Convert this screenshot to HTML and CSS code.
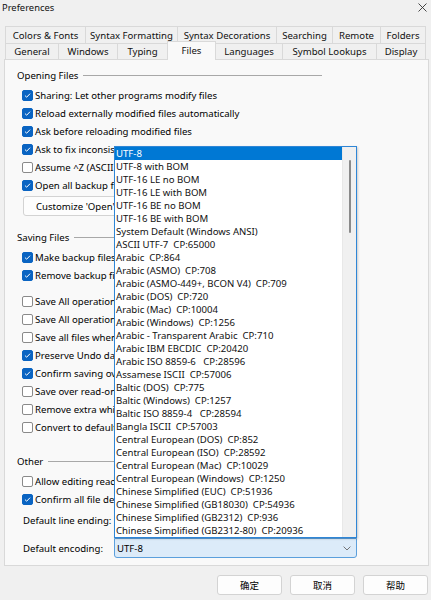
FILE: index.html
```html
<!DOCTYPE html>
<html>
<head>
<meta charset="utf-8">
<title>Preferences</title>
<link rel="stylesheet" href="styles.css">
</head>
<body>
<div class="titlebar">
  <span class="title">Preferences</span>
  <svg class="close" viewBox="0 0 9 9"><path d="M0.5 0.5 L8.5 8.5 M8.5 0.5 L0.5 8.5" stroke="#333" stroke-width="0.9" fill="none"/></svg>
</div>
<div class="tabs">
  <div class="tabrow row1">
    <div class="tab">Colors &amp; Fonts</div>
    <div class="tab">Syntax Formatting</div>
    <div class="tab">Syntax Decorations</div>
    <div class="tab">Searching</div>
    <div class="tab">Remote</div>
    <div class="tab">Folders</div>
  </div>
  <div class="tabrow row2">
    <div class="tab">General</div>
    <div class="tab">Windows</div>
    <div class="tab">Typing</div>
    <div class="tab active">Files</div>
    <div class="tab">Languages</div>
    <div class="tab">Symbol Lookups</div>
    <div class="tab">Display</div>
  </div>
</div>
<div class="panel">
  <div class="group-title"><span>Opening Files</span><i class="rule"></i></div>
  <div class="checks">
    <div class="check on"><span class="box"><svg viewBox="0 0 11 11"><path d="M2.4 5.6 L4.5 7.6 L8.6 3.3" fill="none" stroke="#fff" stroke-width="1.2"/></svg></span><span>Sharing: Let other programs modify files</span></div>
    <div class="check on"><span class="box"><svg viewBox="0 0 11 11"><path d="M2.4 5.6 L4.5 7.6 L8.6 3.3" fill="none" stroke="#fff" stroke-width="1.2"/></svg></span><span>Reload externally modified files automatically</span></div>
    <div class="check on"><span class="box"><svg viewBox="0 0 11 11"><path d="M2.4 5.6 L4.5 7.6 L8.6 3.3" fill="none" stroke="#fff" stroke-width="1.2"/></svg></span><span>Ask before reloading modified files</span></div>
    <div class="check on"><span class="box"><svg viewBox="0 0 11 11"><path d="M2.4 5.6 L4.5 7.6 L8.6 3.3" fill="none" stroke="#fff" stroke-width="1.2"/></svg></span><span>Ask to fix inconsistent line endings</span></div>
    <div class="check"><span class="box"></span><span>Assume ^Z (ASCII 26) is end of file</span></div>
    <div class="check on"><span class="box"><svg viewBox="0 0 11 11"><path d="M2.4 5.6 L4.5 7.6 L8.6 3.3" fill="none" stroke="#fff" stroke-width="1.2"/></svg></span><span>Open all backup files read-only</span></div>
  </div>
  <div class="pushbtn">Customize 'Open' Dialog...</div>

  <div class="group-title saving"><span>Saving Files</span><i class="rule"></i></div>
  <div class="checks">
    <div class="check on"><span class="box"><svg viewBox="0 0 11 11"><path d="M2.4 5.6 L4.5 7.6 L8.6 3.3" fill="none" stroke="#fff" stroke-width="1.2"/></svg></span><span>Make backup files when saving</span></div>
    <div class="check on"><span class="box"><svg viewBox="0 0 11 11"><path d="M2.4 5.6 L4.5 7.6 L8.6 3.3" fill="none" stroke="#fff" stroke-width="1.2"/></svg></span><span>Remove backup files when closing</span></div>
  </div>
  <div class="checks gap">
    <div class="check"><span class="box"></span><span>Save All operation saves all open files</span></div>
    <div class="check"><span class="box"></span><span>Save All operation saves project files</span></div>
    <div class="check"><span class="box"></span><span>Save all files when app loses focus</span></div>
    <div class="check on"><span class="box"><svg viewBox="0 0 11 11"><path d="M2.4 5.6 L4.5 7.6 L8.6 3.3" fill="none" stroke="#fff" stroke-width="1.2"/></svg></span><span>Preserve Undo data after saving</span></div>
    <div class="check on"><span class="box"><svg viewBox="0 0 11 11"><path d="M2.4 5.6 L4.5 7.6 L8.6 3.3" fill="none" stroke="#fff" stroke-width="1.2"/></svg></span><span>Confirm saving over newer files</span></div>
    <div class="check"><span class="box"></span><span>Save over read-only files</span></div>
    <div class="check"><span class="box"></span><span>Remove extra whitespace on save</span></div>
    <div class="check"><span class="box"></span><span>Convert to default line ending on save</span></div>
  </div>

  <div class="group-title other"><span>Other</span><i class="rule"></i></div>
  <div class="checks">
    <div class="check"><span class="box"></span><span>Allow editing read-only files</span></div>
    <div class="check on"><span class="box"><svg viewBox="0 0 11 11"><path d="M2.4 5.6 L4.5 7.6 L8.6 3.3" fill="none" stroke="#fff" stroke-width="1.2"/></svg></span><span>Confirm all file deletions</span></div>
  </div>
  <div class="fields">
    <div class="field"><span class="flabel">Default line ending:</span><div class="combo"></div></div>
    <div class="field"><span class="flabel">Default encoding:</span><div class="combo focus"><span>UTF-8</span><svg class="chev" viewBox="0 0 8 5"><path d="M0.6 0.6 L4 4 L7.4 0.6" fill="none" stroke="#666" stroke-width="0.9"/></svg></div></div>
  </div>
</div>
<div class="buttons">
  <div class="btn">确定</div>
  <div class="btn">取消</div>
  <div class="btn">帮助</div>
</div>

<div class="popup">
  <div class="list">
    <div class="item sel">UTF-8</div>
    <div class="item">UTF-8 with BOM</div>
    <div class="item">UTF-16 LE no BOM</div>
    <div class="item">UTF-16 LE with BOM</div>
    <div class="item">UTF-16 BE no BOM</div>
    <div class="item">UTF-16 BE with BOM</div>
    <div class="item">System Default (Windows ANSI)</div>
    <div class="item">ASCII UTF-7  CP:65000</div>
    <div class="item">Arabic  CP:864</div>
    <div class="item">Arabic (ASMO)  CP:708</div>
    <div class="item">Arabic (ASMO-449+, BCON V4)  CP:709</div>
    <div class="item">Arabic (DOS)  CP:720</div>
    <div class="item">Arabic (Mac)  CP:10004</div>
    <div class="item">Arabic (Windows)  CP:1256</div>
    <div class="item">Arabic - Transparent Arabic  CP:710</div>
    <div class="item">Arabic IBM EBCDIC  CP:20420</div>
    <div class="item">Arabic ISO 8859-6   CP:28596</div>
    <div class="item">Assamese ISCII  CP:57006</div>
    <div class="item">Baltic (DOS)  CP:775</div>
    <div class="item">Baltic (Windows)  CP:1257</div>
    <div class="item">Baltic ISO 8859-4   CP:28594</div>
    <div class="item">Bangla ISCII  CP:57003</div>
    <div class="item">Central European (DOS)  CP:852</div>
    <div class="item">Central European (ISO)  CP:28592</div>
    <div class="item">Central European (Mac)  CP:10029</div>
    <div class="item">Central European (Windows)  CP:1250</div>
    <div class="item">Chinese Simplified (EUC)  CP:51936</div>
    <div class="item">Chinese Simplified (GB18030)  CP:54936</div>
    <div class="item">Chinese Simplified (GB2312)  CP:936</div>
    <div class="item">Chinese Simplified (GB2312-80)  CP:20936</div>
  </div>
  <div class="scroll"><div class="thumb"></div></div>
</div>
</body>
</html>
```

FILE: styles.css
```css
* { box-sizing: border-box; }
html, body { margin: 0; padding: 0; }
body {
  width: 431px;
  height: 600px;
  overflow: hidden;
  position: relative;
  background: #f0f0f0;
  color: #000;
  font-family: "Noto Sans", "Noto Sans CJK SC", sans-serif;
  font-size: 9.6px;
}

/* title bar */
.titlebar {
  height: 26px;
  display: flex;
  justify-content: space-between;
  align-items: flex-start;
}
.title { margin-left: 2px; line-height: 15px; font-size: 9.4px; color: #111; }
.close { width: 9px; height: 9px; margin-top: 3px; margin-right: 4px; }

/* tabs */
.tabs { margin-left: 5px; width: 424px; }
.tabrow { display: flex; align-items: flex-start; }
.row1 { height: 17px; }
.row2 { height: 16px; }
.tab {
  border: 1px solid #d9d9d9;
  border-bottom: none;
  margin-right: -1px;
  background: #f0f0f0;
  display: flex;
  align-items: center;
  justify-content: center;
  white-space: nowrap;
  color: #111;
}
.row1 .tab { height: 17px; }
.row2 .tab { height: 16px; }
.row1 .tab:nth-child(1) { width: 81px; }
.row1 .tab:nth-child(2) { width: 93px; }
.row1 .tab:nth-child(3) { width: 100px; }
.row1 .tab:nth-child(4) { width: 57px; }
.row1 .tab:nth-child(5) { width: 49px; }
.row1 .tab:nth-child(6) { width: 46px; }
.row2 .tab:nth-child(1) { width: 54px; }
.row2 .tab:nth-child(2) { width: 60px; }
.row2 .tab:nth-child(3) { width: 51px; }
.row2 .tab:nth-child(4) { width: 49px; }
.row2 .tab:nth-child(5) { width: 68px; }
.row2 .tab:nth-child(6) { width: 95px; }
.row2 .tab:nth-child(7) { width: 50px; }
.row2 .tab.active {
  height: 19px;
  margin-top: -2px;
  background: #f9f9f9;
  position: relative;
  z-index: 2;
  padding-bottom: 1px;
}

/* panel */
.panel {
  margin-left: 4px;
  width: 425px;
  height: 507px;
  border: 1px solid #d9d9d9;
  background: #f9f9f9;
  padding-top: 8px;
}
.group-title {
  display: flex;
  align-items: center;
  height: 14px;
  margin-left: 12px;
  width: 305px;
  white-space: nowrap;
}
.group-title .rule {
  flex: 1;
  height: 1px;
  background: #a8a8a8;
  margin-left: 5px;
}
.group-title.saving { margin-top: 14px; }
.group-title.other { margin-top: 18px; }
.checks { margin-top: 4px; }
.checks.gap { margin-top: 8px; }
.check {
  display: flex;
  align-items: center;
  height: 18px;
  padding-left: 17px;
  white-space: nowrap;
}
.box {
  flex: none;
  width: 11px;
  height: 11px;
  border: 1px solid #8a8a8a;
  border-radius: 2px;
  background: #fff;
  margin-right: 2px;
  display: flex;
}
.box svg { width: 9px; height: 9px; }
.check.on .box { background: #0a64c2; border-color: #0a64c2; }

.pushbtn {
  margin: 2px 0 0 18px;
  height: 20px;
  width: 140px;
  padding-left: 12px;
  border: 1px solid #d3d3d3;
  border-radius: 3px;
  background: #fdfdfd;
  display: flex;
  align-items: center;
  white-space: nowrap;
}

.fields { margin-top: 2px; display: flex; flex-direction: column; gap: 8px; }
.field { display: flex; align-items: center; height: 20px; padding-left: 18px; }
.flabel { width: 91px; white-space: nowrap; }
.combo {
  width: 243px;
  height: 20px;
  border: 1px solid #d0d0d0;
  border-radius: 3px;
  background: #fdfdfd;
  padding-left: 2px;
  display: flex;
  align-items: center;
  justify-content: space-between;
}
.combo.focus {
  background: #dcebf9;
  border-color: #5b9fdc;
  border-radius: 0 0 3px 3px;
}
.chev { width: 8px; height: 5px; margin-right: 5px; }

/* bottom buttons */
.buttons {
  display: flex;
  justify-content: flex-end;
  gap: 8px;
  padding-right: 3px;
  margin-top: 9px;
}
.btn {
  width: 65px;
  height: 20px;
  border: 1px solid #d3d3d3;
  border-radius: 3px;
  background: #fdfdfd;
  display: flex;
  align-items: center;
  justify-content: center;
  font-family: "Noto Sans CJK SC", sans-serif;
  font-size: 9.5px;
}

/* dropdown popup */
.popup {
  position: absolute;
  left: 114px;
  top: 146px;
  width: 243px;
  height: 392px;
  border: 1px solid #2f86d6;
  background: #fff;
  display: flex;
  box-shadow: 1px 1px 2px rgba(0,0,0,0.18);
  z-index: 10;
}
.list { flex: 1; overflow: hidden; }
.item {
  height: 13px;
  line-height: 13px;
  padding-left: 1px;
  white-space: pre;
  color: #111;
}
.item.sel { background: #0078d4; color: #fff; }
.scroll {
  width: 14px;
  background: #f0f0f0;
  border-left: 1px solid #e8e8e8;
  display: flex;
  justify-content: center;
  padding-top: 13px;
}
.thumb { width: 2px; height: 73px; background: #8a8a8a; border-radius: 1px; }
```
